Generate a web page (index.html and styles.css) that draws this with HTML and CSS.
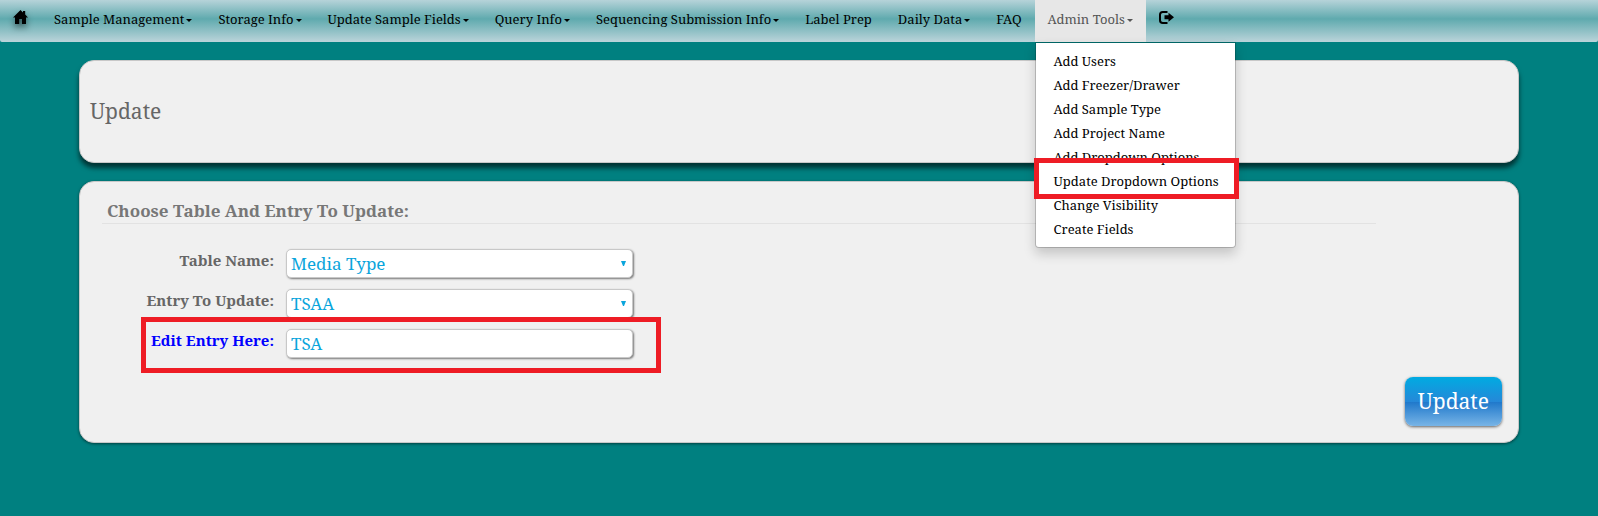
FILE: index.html
```html
<!DOCTYPE html>
<html lang="en">
<head>
<meta charset="utf-8">
<meta name="viewport" content="width=device-width, initial-scale=1">
<title>Update</title>
<link rel="stylesheet" href="styles.css">
</head>
<body>
<nav class="navbar">
  <a class="nav-item nav-home" href="#" aria-label="Home">
    <svg width="15" height="14" viewBox="0 0 15 14"><path d="M7.500 0 10 2.400V1h2.200v3.600L15 7.400H13V14H9V9H6.200V14H2V7.400H0Z"/></svg>
  </a>
  <a class="nav-item" href="#">Sample Management<span class="caret"></span></a>
  <a class="nav-item" href="#">Storage Info<span class="caret"></span></a>
  <a class="nav-item" href="#">Update Sample Fields<span class="caret"></span></a>
  <a class="nav-item" href="#">Query Info<span class="caret"></span></a>
  <a class="nav-item" href="#">Sequencing Submission Info<span class="caret"></span></a>
  <a class="nav-item" href="#">Label Prep</a>
  <a class="nav-item" href="#">Daily Data<span class="caret"></span></a>
  <a class="nav-item" href="#">FAQ</a>
  <div class="dropdown">
    <a class="nav-item nav-open" href="#">Admin Tools<span class="caret"></span></a>
    <div class="menu">
      <a class="menu-item" href="#">Add Users</a>
      <a class="menu-item" href="#">Add Freezer/Drawer</a>
      <a class="menu-item" href="#">Add Sample Type</a>
      <a class="menu-item" href="#">Add Project Name</a>
      <a class="menu-item" href="#">Add Dropdown Options</a>
      <a class="menu-item menu-marked" href="#">Update Dropdown Options</a>
      <a class="menu-item" href="#">Change Visibility</a>
      <a class="menu-item" href="#">Create Fields</a>
    </div>
  </div>
  <a class="nav-item nav-exit" href="#" aria-label="Log out">
    <svg width="15" height="13" viewBox="0 0 15 13"><path d="M8.500 1H3.800Q1 1 1 3.800V9.200Q1 12 3.800 12H8.500" fill="none" stroke="#000" stroke-width="2"/><path d="M5.500 4.300H9.500V1.800L15 6.200 9.500 10.700V8.200H5.500Z"/></svg>
  </a>
</nav>
<main class="page">
  <header class="panel panel-title"><h1 class="title">Update</h1></header>
  <form class="panel panel-form">
    <h2 class="legend">Choose Table And Entry To Update:</h2>
    <div class="fields">
      <div class="field">
        <label class="label" for="table">Table Name:</label>
        <div class="select-wrap">
          <select class="control" id="table"><option>Media Type</option></select>
          <svg class="arrow" width="5" height="5" viewBox="0 0 5 5"><path d="M0 0H5L3 5H2Z"/></svg>
        </div>
      </div>
      <div class="field">
        <label class="label" for="entry">Entry To Update:</label>
        <div class="select-wrap">
          <select class="control" id="entry"><option>TSAA</option></select>
          <svg class="arrow" width="5" height="5" viewBox="0 0 5 5"><path d="M0 0H5L3 5H2Z"/></svg>
        </div>
      </div>
      <div class="field field-marked">
        <label class="label label-edit" for="edit">Edit Entry Here:</label>
        <input class="control" id="edit" type="text" value="TSA">
      </div>
    </div>
    <div class="actions"><button class="submit" type="button">Update</button></div>
  </form>
</main>
</body>
</html>
```

FILE: styles.css
```css
*, ::before, ::after { box-sizing: border-box; }
body {
  margin: 0;
  min-height: 100vh;
  background: #008080;
  font-family: "Droid Serif", "Noto Serif", "Liberation Serif", serif;
}
.navbar {
  display: flex;
  height: 42px;
  background: linear-gradient(#b6d3d9, #5faaae 45%, #bbd4da);
  border-radius: 0 0 2px 2px;
}
.nav-item {
  display: flex;
  align-items: center;
  height: 42px;
  padding: 0 13px 4px;
  font-size: 13px;
  color: #000;
  text-decoration: none;
  white-space: nowrap;
}
.caret {
  margin: 3px 0 0 2px;
  border: 3px solid transparent;
  border-top-color: currentColor;
  border-bottom: 0;
}
.nav-home { padding-bottom: 8px; }
.nav-home svg { filter: drop-shadow(0 4px 3px rgba(0, 0, 0, .5)); }
.nav-exit { padding-bottom: 8px; }
.nav-open { background: #e7e7e7; color: #555; }
.dropdown { position: relative; }
.menu {
  position: absolute;
  top: 42px;
  left: 0;
  z-index: 2;
  display: flex;
  flex-direction: column;
  width: 201px;
  padding: 6px 0;
  background: #fff;
  background-clip: padding-box;
  border: 1px solid rgba(0, 0, 0, .18);
  border-radius: 0 0 4px 4px;
  box-shadow: 0 6px 12px rgba(0, 0, 0, .18);
}
.menu-item {
  padding: 0 18px;
  font-size: 13px;
  line-height: 24px;
  color: #000;
  text-decoration: none;
  white-space: nowrap;
}
.menu-marked { position: relative; }
.menu-marked::after {
  content: "";
  position: absolute;
  inset: -11px -4px -6px -2px;
  border: 5px solid #ee1c25;
}
.page {
  display: flex;
  flex-direction: column;
  gap: 18px;
  margin: 18px 79px 0;
}
.panel {
  background: #f0f0f0;
  border: 1px solid #c8c8c8;
  border-radius: 15px;
}
.panel-title {
  padding: 34px 10px;
  box-shadow: 0 5px 5px rgba(0, 0, 0, .6);
}
.title {
  margin: 0;
  font-size: 21px;
  line-height: 33px;
  font-weight: 400;
  color: #666;
}
.panel-form {
  padding: 17px 16px 16px 22px;
  box-shadow: 0 1px 3px rgba(0, 0, 0, .5);
}
.legend {
  width: 91%;
  margin: 0 0 25px;
  padding: 0 5px;
  border-bottom: 1px solid #e2e2e2;
  font-size: 17px;
  line-height: 24px;
  color: #777;
}
.fields { display: flex; flex-direction: column; gap: 11px; }
.field { display: flex; align-items: flex-start; gap: 12px; }
.label {
  width: 172px;
  text-align: right;
  font-size: 15px;
  line-height: 22px;
  font-weight: 700;
  color: #666;
}
.label-edit { color: #00f; }
.select-wrap { position: relative; }
.control {
  display: block;
  width: 347px;
  height: 29px;
  margin: 0;
  padding: 0 4px;
  appearance: none;
  background: #fff;
  border: 1px solid #c8c8c8;
  border-radius: 5px;
  box-shadow: 1px 1px 2px rgba(0, 0, 0, .5);
  font-family: inherit;
  font-size: 17px;
  color: #0aa5dc;
}
.arrow {
  position: absolute;
  top: 12px;
  right: 7px;
  fill: #0aa5dc;
  pointer-events: none;
}
.field-marked { position: relative; }
.field-marked::after {
  content: "";
  position: absolute;
  top: -12px;
  left: 39px;
  width: 520px;
  height: 56px;
  border: 5px solid #ee1c25;
  pointer-events: none;
}
.actions { display: flex; justify-content: flex-end; margin-top: 19px; }
.submit {
  height: 49px;
  padding: 0 13px 2px;
  background: linear-gradient(#00abe2, #2588d8 50%, #1f78cb 51%, #78b4e6);
  border: 0;
  border-radius: 8px;
  box-shadow: 0 1px 3px rgba(0, 0, 0, .6);
  font-family: inherit;
  font-size: 21px;
  color: #fff;
}
```
